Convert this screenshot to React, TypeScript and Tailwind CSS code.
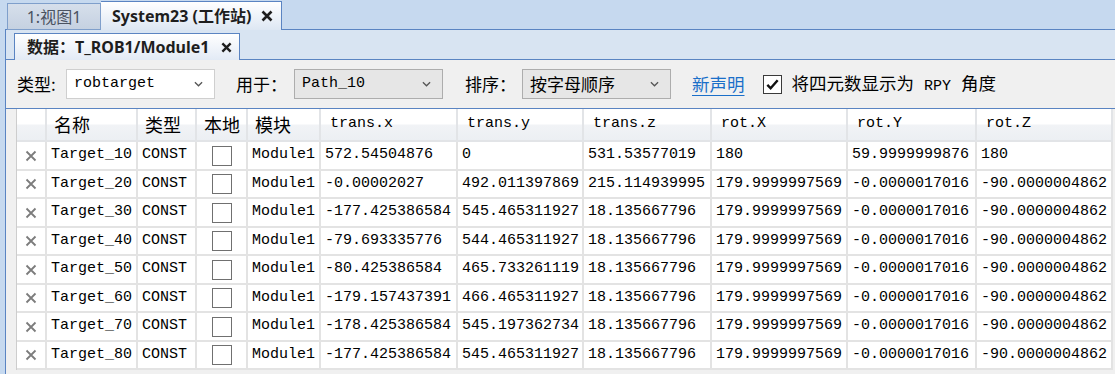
import React from "react";

const mono = "font-['Liberation_Mono',monospace] text-[15px]";
const cjk = "font-['Noto_Sans_CJK_SC',sans-serif]";

const rot = ["179.9999997569", "-0.0000017016", "-90.0000004862"];

const rows: string[][] = [
  ["Target_10", "572.54504876", "0", "531.53577019", "180", "59.9999999876", "180"],
  ["Target_20", "-0.00002027", "492.011397869", "215.114939995", ...rot],
  ["Target_30", "-177.425386584", "545.465311927", "18.135667796", ...rot],
  ["Target_40", "-79.693335776", "544.465311927", "18.135667796", ...rot],
  ["Target_50", "-80.425386584", "465.733261119", "18.135667796", ...rot],
  ["Target_60", "-179.157437391", "466.465311927", "18.135667796", ...rot],
  ["Target_70", "-178.425386584", "545.197362734", "18.135667796", ...rot],
  ["Target_80", "-177.425386584", "545.465311927", "18.135667796", ...rot],
];

const cols =
  "grid grid-cols-[30px_91px_59px_51px_73px_137px_126px_128px_136px_129px_136px]";

function XIcon({ className, width = 2 }: { className?: string; width?: number }) {
  return (
    <svg viewBox="0 0 12 12" className={className} fill="none" stroke="currentColor" strokeWidth={width}>
      <path d="M1.5 1.5L10.5 10.5M10.5 1.5L1.5 10.5" />
    </svg>
  );
}

function Chevron() {
  return (
    <svg viewBox="0 0 10 6" className="w-[9px] h-[6px] text-[#555]" fill="none" stroke="currentColor" strokeWidth="1.4">
      <path d="M1 1l4 4 4-4" />
    </svg>
  );
}

function Select({ children, gray }: { children: React.ReactNode; gray?: boolean }) {
  return (
    <div
      className={`shrink-0 flex items-center justify-between w-[149px] h-[30px] border pl-[7px] pr-[11px] ${
        gray ? "bg-[#e6e6e6] border-[#adadad]" : "bg-white border-[#cfcfcf]"
      }`}
    >
      {children}
      <Chevron />
    </div>
  );
}

function HeadCell({ children, zh }: { children?: React.ReactNode; zh?: boolean }) {
  return (
    <div
      className={`flex items-center h-[33px] border-r-2 border-b-2 border-[#e2e4e7] bg-[linear-gradient(to_bottom,#ffffff_0%,#ffffff_48%,#f1f3f6_52%,#eceff3_100%)] ${
        zh ? `${cjk} text-[18px] pl-[7px]` : `${mono} pl-[9px]`
      }`}
    >
      {children}
    </div>
  );
}

function Cell({ children, center }: { children?: React.ReactNode; center?: boolean }) {
  return (
    <div
      className={`flex items-center border-r-2 border-b-2 border-[#e3e3e3] bg-white whitespace-nowrap overflow-hidden ${
        center ? "justify-center" : "pl-[4px]"
      }`}
    >
      {children}
    </div>
  );
}

export default function App() {
  return (
    <div className={`w-[1115px] h-[374px] bg-[#c6d9ef] overflow-hidden flex flex-col text-black ${cjk}`}>
      {/* outer document tabs */}
      <div className="flex items-end h-[30px] pl-[7px] relative z-10">
        <div className="flex items-center justify-center w-[94px] h-[27px] border border-[#7f9fcb] bg-[linear-gradient(to_bottom,#d6dfeb,#c5d1e1)] text-[16px] text-[#4a5260] font-['Noto_Sans','Noto_Sans_CJK_SC',sans-serif]">
          1:视图1
        </div>
        <div className="flex items-center justify-between w-[181px] h-[29px] border border-b-0 border-l-0 border-[#5a84c2] bg-[linear-gradient(to_bottom,#ffffff,#dde7f3)] pl-[11px] pr-[8px] text-[16px] font-bold text-[#1e1e1e] font-['Noto_Sans','Noto_Sans_CJK_SC',sans-serif]">
          <span>System23 (工作站)</span>
          <XIcon className="w-[12px] h-[12px] text-[#1e1e1e]" width={2.6} />
        </div>
      </div>

      <div className="flex-1 ml-[5px] -mt-px border-l border-t border-[#5a84c2] bg-[#d8e4f2] flex flex-col">
        {/* inner document tab */}
        <div className="flex items-end h-[30px] pl-[8px] relative z-10">
          <div className="flex items-center justify-between w-[226px] h-[27px] border border-b-0 border-[#5a84c2] bg-[linear-gradient(to_bottom,#ffffff,#e2eaf5)] pl-[12px] pr-[7px] text-[16px] font-bold text-[#1e1e1e] font-['Noto_Sans','Noto_Sans_CJK_SC',sans-serif]">
            <span>数据：T_ROB1/Module1</span>
            <XIcon className="w-[11px] h-[11px] text-[#1e1e1e]" width={2.6} />
          </div>
        </div>

        {/* toolbar */}
        <div className="flex items-center h-[50px] -mt-px border-y border-[#5a84c2] bg-[#f0f0f0] pl-[11px] text-[17px] whitespace-nowrap">
          <span className="w-[49px] shrink-0">类型:</span>
          <Select>
            <span className={mono}>robtarget</span>
          </Select>
          <span className="ml-[21px] w-[58px] shrink-0">用于：</span>
          <Select gray>
            <span className={mono}>Path_10</span>
          </Select>
          <span className="ml-[22px] w-[57px] shrink-0">排序：</span>
          <Select gray>
            <span>按字母顺序</span>
          </Select>
          <span className="ml-[21px] text-[#1a6fc9] text-[17.5px] underline underline-offset-[4px] decoration-1">新声明</span>
          <span className="ml-[18px] shrink-0 w-[19px] h-[19px] border border-[#3a3a3a] bg-white flex items-center justify-center">
            <svg viewBox="0 0 16 16" className="w-[15px] h-[15px]" fill="none" stroke="#111" strokeWidth="2.6">
              <path d="M2.5 8.5l3.5 3.5 7.5-8.5" />
            </svg>
          </span>
          <span className="ml-[10px] text-[17.5px]">
            将四元数显示为<span className={`${mono} px-[10px]`}>RPY</span>角度
          </span>
        </div>

        {/* data grid */}
        <div className="flex-1 bg-[#f0f0f0] pl-[10px]">
          <div className="border-l border-[#cdcdcd] w-fit">
            <div className={cols}>
              <HeadCell />
              <HeadCell zh>名称</HeadCell>
              <HeadCell zh>类型</HeadCell>
              <HeadCell zh>本地</HeadCell>
              <HeadCell zh>模块</HeadCell>
              <HeadCell>trans.x</HeadCell>
              <HeadCell>trans.y</HeadCell>
              <HeadCell>trans.z</HeadCell>
              <HeadCell>rot.X</HeadCell>
              <HeadCell>rot.Y</HeadCell>
              <HeadCell>rot.Z</HeadCell>
            </div>
            {rows.map((r, i) => (
              <div key={r[0]} className={`${cols} ${mono} ${i % 2 === 0 ? "h-[29px]" : "h-[28px]"}`}>
                <Cell center>
                  <XIcon className="w-[12px] h-[12px] text-[#7c7c7c]" width={1.8} />
                </Cell>
                <Cell>{r[0]}</Cell>
                <Cell>CONST</Cell>
                <Cell center>
                  <span className="w-[20px] h-[20px] border border-[#707070] bg-white" />
                </Cell>
                <Cell>Module1</Cell>
                {r.slice(1).map((v, j) => (
                  <Cell key={j}>{v}</Cell>
                ))}
              </div>
            ))}
          </div>
        </div>
      </div>
    </div>
  );
}
